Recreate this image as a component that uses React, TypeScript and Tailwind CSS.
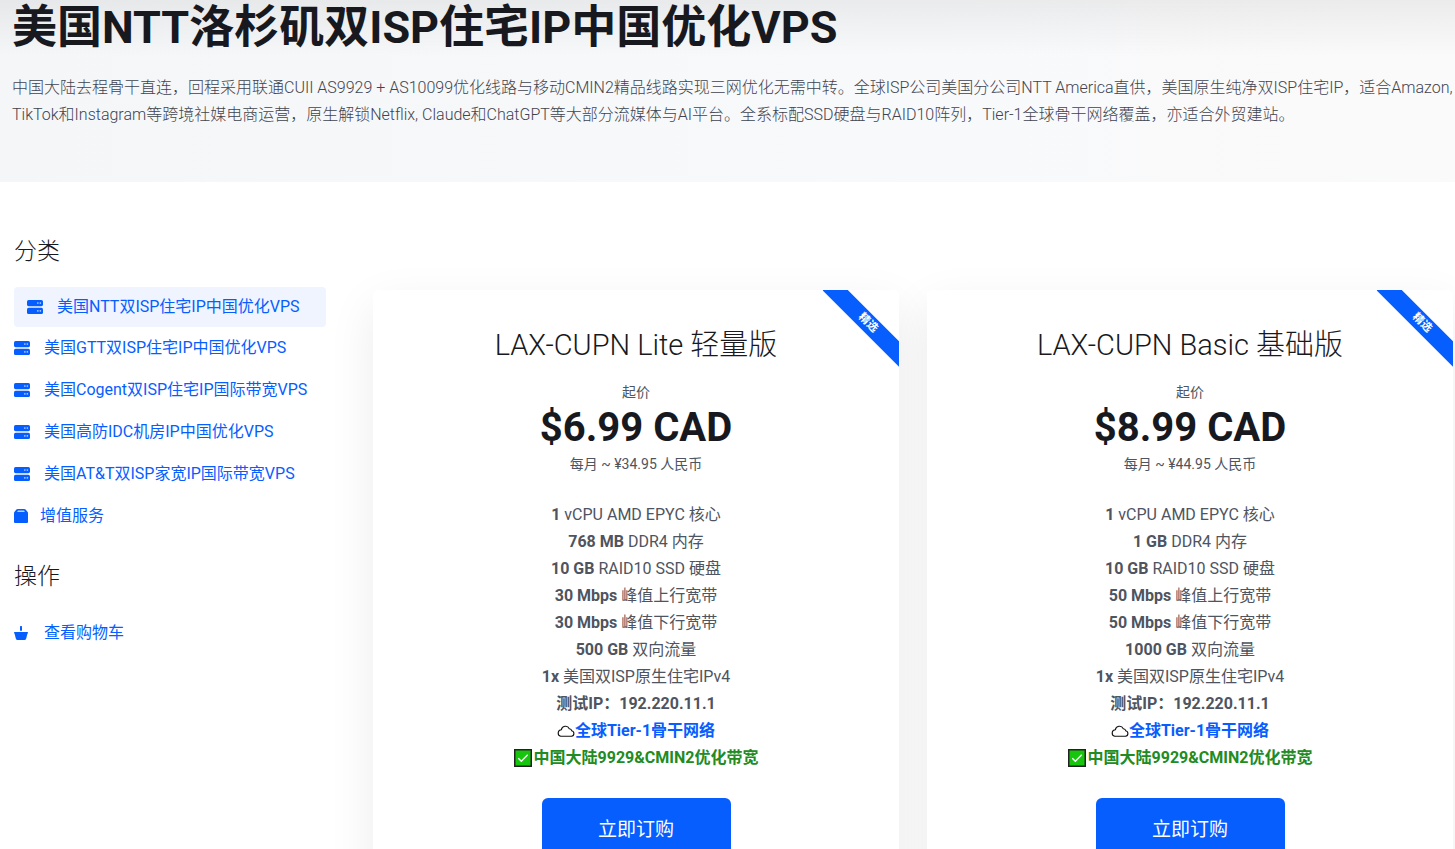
import type { ReactNode } from "react";

const categories = [
  { label: "美国NTT双ISP住宅IP中国优化VPS", active: true },
  { label: "美国GTT双ISP住宅IP中国优化VPS" },
  { label: "美国Cogent双ISP住宅IP国际带宽VPS" },
  { label: "美国高防IDC机房IP中国优化VPS" },
  { label: "美国AT&T双ISP家宽IP国际带宽VPS" },
];

const plans = [
  {
    name: "LAX-CUPN Lite 轻量版",
    price: "$6.99 CAD",
    monthly: "每月 ~ ¥34.95 人民币",
    specs: [
      ["1", "vCPU AMD EPYC 核心"],
      ["768 MB", "DDR4 内存"],
      ["10 GB", "RAID10 SSD 硬盘"],
      ["30 Mbps", "峰值上行宽带"],
      ["30 Mbps", "峰值下行宽带"],
      ["500 GB", "双向流量"],
      ["1x", "美国双ISP原生住宅IPv4"],
    ],
  },
  {
    name: "LAX-CUPN Basic 基础版",
    price: "$8.99 CAD",
    monthly: "每月 ~ ¥44.95 人民币",
    specs: [
      ["1", "vCPU AMD EPYC 核心"],
      ["1 GB", "DDR4 内存"],
      ["10 GB", "RAID10 SSD 硬盘"],
      ["50 Mbps", "峰值上行宽带"],
      ["50 Mbps", "峰值下行宽带"],
      ["1000 GB", "双向流量"],
      ["1x", "美国双ISP原生住宅IPv4"],
    ],
  },
];

function ServerIcon() {
  return (
    <svg viewBox="0 0 16 14" className="w-4 h-3.5 shrink-0" fill="currentColor" aria-hidden="true">
      <rect width="16" height="6.2" rx="1.6" />
      <rect y="7.8" width="16" height="6.2" rx="1.6" />
      <g fill="#b4cdff">
        <rect x="10" y="2.2" width="1.7" height="1.7" rx="0.8" />
        <rect x="12.5" y="2.2" width="1.7" height="1.7" rx="0.8" />
        <rect x="10" y="10.1" width="1.7" height="1.7" rx="0.8" />
        <rect x="12.5" y="10.1" width="1.7" height="1.7" rx="0.8" />
      </g>
    </svg>
  );
}

function BoxIcon() {
  return (
    <svg viewBox="0 0 14 14" className="w-3.5 h-3.5 shrink-0" aria-hidden="true">
      <path fill="currentColor" d="M2.4.6Q3 0 3.8 0h6.4q.8 0 1.4.6L13.6 3q.4.5.4 1v9q0 1-1 1H1q-1 0-1-1V4q0-.5.4-1z" />
      <path fill="#b9d0ff" d="M4 1.6h6L10.9 3H3.1z" />
    </svg>
  );
}

function BasketIcon() {
  return (
    <svg viewBox="0 0 14 14" className="w-3.5 h-3.5 shrink-0" fill="currentColor" aria-hidden="true">
      <rect x="6" width="2" height="4.8" rx="0.5" />
      <path d="M.6 6h12.8q.6 0 .6.8 0 .7-.6.9l-1.2 4.8Q11.8 14 10.4 14H3.6Q2.2 14 1.8 12.5L.6 7.7Q0 7.5 0 6.8 0 6 .6 6z" />
    </svg>
  );
}

function CloudIcon() {
  return (
    <svg viewBox="0 0 18 12" className="w-[18px] h-3 shrink-0" fill="none" stroke="#111" strokeWidth="1.1" aria-hidden="true">
      <path d="M3.7 11.3h10.8a2.8 2.8 0 0 0 .2-5.5 2.4 2.4 0 0 0-2.4-2.1A4.2 4.2 0 0 0 4.3 4.8a3.3 3.3 0 0 0-.6 6.5z" />
    </svg>
  );
}

function CheckIcon() {
  return (
    <svg viewBox="0 0 18 18" className="w-[18px] h-[18px] shrink-0" aria-hidden="true">
      <rect x="0.75" y="0.75" width="16.5" height="16.5" fill="#16c60c" stroke="#222" strokeWidth="1.5" />
      <path d="M4.3 9.3l3 3L13.7 5.7" fill="none" stroke="#fff" strokeWidth="1.4" />
    </svg>
  );
}

function NavLink({ icon, active, tight, children }: { icon: ReactNode; active?: boolean; tight?: boolean; children: ReactNode }) {
  return (
    <a
      href="#"
      className={`flex items-center text-[#065eff] ${tight ? "gap-3" : "gap-3.5"} ${
        active ? "h-10 rounded bg-[#f0f4ff] px-[13px]" : "h-[42px]"
      }`}
    >
      {icon}
      <span>{children}</span>
    </a>
  );
}

function PlanCard({ plan }: { plan: (typeof plans)[number] }) {
  return (
    <article className="relative overflow-hidden rounded-md bg-white px-6 pt-9 pb-12 text-center text-[#4e5460]">
      <div className="absolute top-6 -right-6 w-[110px] h-[18px] rotate-45 bg-[#065eff] text-white text-[11px] leading-[18px] font-bold">
        精选
      </div>
      <h3 className="text-[29px] leading-[38px] font-light text-[#17191e]">{plan.name}</h3>
      <p className="mt-[18px] text-sm leading-5">起价</p>
      <p className="text-[40px] leading-[52px] font-bold text-[#17191e]">{plan.price}</p>
      <p className="text-sm leading-5">{plan.monthly}</p>
      <ul className="mt-[27px] leading-[27px]">
        {plan.specs.map(([amount, text], i) => (
          <li key={i}>
            <strong className="font-bold">{amount}</strong> {text}
          </li>
        ))}
        <li className="font-bold">测试IP：192.220.11.1</li>
        <li className="flex items-center justify-center font-bold text-[#065eff]">
          <CloudIcon />
          <a href="#">全球Tier-1骨干网络</a>
        </li>
        <li className="flex items-center justify-center gap-0.5 font-bold text-[#228b22]">
          <CheckIcon />
          中国大陆9929&amp;CMIN2优化带宽
        </li>
      </ul>
      <button className="mt-[27px] w-[189px] h-16 rounded-md bg-[#065eff] text-[19px] text-white">立即订购</button>
    </article>
  );
}

export default function App() {
  return (
    <div className="min-h-screen bg-white text-base font-[Roboto,'Noto_Sans_CJK_SC',sans-serif]">
      <header className="bg-[linear-gradient(rgba(0,0,0,0.06),transparent_56px),linear-gradient(to_right,#f5f6f8,#f8f9fb_60%,#fafafa)] pl-3 pb-[54px]">
        <h1 className="text-[45px] leading-[56px] font-bold text-[#17191e]">美国NTT洛杉矶双ISP住宅IP中国优化VPS</h1>
        <p className="mt-[18px] leading-[27px] font-light text-[#3f444f]">
          中国大陆去程骨干直连，回程采用联通CUII AS9929 + AS10099优化线路与移动CMIN2精品线路实现三网优化无需中转。全球ISP公司美国分公司NTT America直供，美国原生纯净双ISP住宅IP，适合Amazon, TikTok和Instagram等跨境社媒电商运营，原生解锁Netflix, Claude和ChatGPT等大部分流媒体与AI平台。全系标配SSD硬盘与RAID10阵列，Tier-1全球骨干网络覆盖，亦适合外贸建站。
        </p>
      </header>

      <main className="flex gap-[47px] pt-[54px] pl-3.5 pr-0.5">
        <aside className="w-[312px] shrink-0">
          <h2 className="text-[23px] leading-8 font-light text-[#17191e]">分类</h2>
          <nav className="mt-[19px]">
            {categories.map((c) => (
              <NavLink key={c.label} icon={<ServerIcon />} active={c.active}>
                {c.label}
              </NavLink>
            ))}
            <NavLink icon={<BoxIcon />} tight>
              增值服务
            </NavLink>
          </nav>
          <h2 className="mt-6 text-[23px] leading-8 font-light text-[#17191e]">操作</h2>
          <nav className="mt-[19px]">
            <NavLink icon={<BasketIcon />}>
              <span className="pl-0.5">查看购物车</span>
            </NavLink>
          </nav>
        </aside>

        <section className="mt-[54px] grid flex-1 grid-cols-2 gap-7">
          {plans.map((p) => (
            <div key={p.name} className="rounded-md shadow-[0_16px_48px_rgba(0,0,0,0.08)]">
              <PlanCard plan={p} />
            </div>
          ))}
        </section>
      </main>
    </div>
  );
}
